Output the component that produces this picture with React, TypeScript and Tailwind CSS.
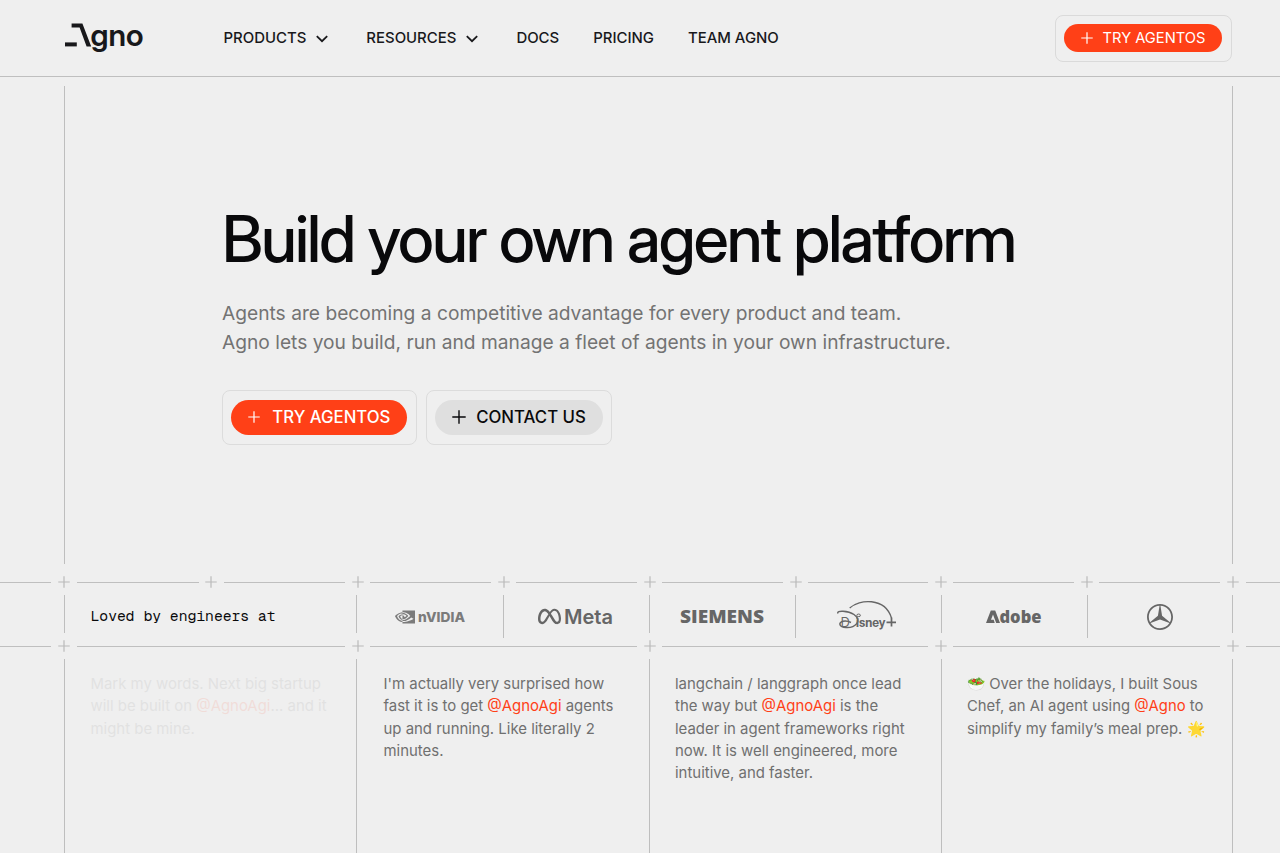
import { SiNvidia, SiMeta, SiMercedes } from "react-icons/si";
import { ReactNode } from "react";

function Plus({ size, className }: { size: number; className?: string }) {
  return (
    <svg width={size} height={size} viewBox="0 0 14 14" className={className} fill="none" stroke="currentColor" strokeWidth="1.4">
      <path d="M7 0.3v13.4M0.3 7h13.4" />
    </svg>
  );
}

function Chevron() {
  return (
    <svg width="17" height="10" viewBox="-2 -1 17 10" className="mt-[2px] mr-px" fill="none" stroke="#18181b" strokeWidth="1.8">
      <path d="M0.8 1.1L6 6.2L11.2 1.1" />
    </svg>
  );
}

function AgnoLogo() {
  return (
    <svg width="84" height="36" viewBox="0 0 84 36" className="block overflow-visible">
      <path d="M6.6 2.6H17.4L26.2 25.4H21.6L14.6 6.4H6.6Z" fill="#18181b" />
      <path d="M0 21.4H11.8V25.4H0Z" fill="#18181b" />
      <text x="25.6" y="25.2" textLength="53" lengthAdjust="spacingAndGlyphs" fontFamily="'Inter Display', Inter, sans-serif" fontWeight="600" fontSize="31" fill="#18181b">gno</text>
    </svg>
  );
}

function NavItem({ label, menu }: { label: string; menu?: boolean }) {
  return (
    <a className="flex items-center gap-2 text-[14.93px] leading-5 font-medium text-[#18181b]">
      {label}
      {menu && <Chevron />}
    </a>
  );
}

const columns = [
  "grid-cols-[51px_26px_121.5px_25.5px_121px_25px_121px_25px_121px_25px_121px_25px_120px_25px_121px_25px_121px_26px_1fr]",
  "grid-cols-[51px_26px_268px_25px_267px_25px_266px_25px_267px_26px_1fr]",
];

function Rule({ cells, grid }: { cells: number; grid: string }) {
  return (
    <div className={"grid h-[26px] items-center " + grid}>
      {Array.from({ length: cells }, (_, i) =>
        i % 2 === 0 ? (
          <span key={i} className="h-px bg-[#bfbfbf]" />
        ) : (
          <span key={i} className="flex justify-center text-[#bababa]">
            <Plus size={12} />
          </span>
        ),
      )}
    </div>
  );
}

function Cell({ children }: { children: ReactNode }) {
  return <div className="flex h-[43px] flex-1 items-center justify-center text-[#666]">{children}</div>;
}

function Line({ tall }: { tall?: boolean }) {
  return <span className={tall ? "h-[43px] w-px bg-[#bebebe]" : "h-[38px] w-px bg-[#bebebe]"} />;
}

function Mention({ children }: { children: ReactNode }) {
  return <span className="text-[#ff4017]">{children}</span>;
}

export default function App() {
  return (
    <div className="h-[853px] w-[1280px] overflow-hidden bg-[#efefef] font-['Inter',sans-serif] text-[#09090b]">
      <header className="flex h-[77px] items-start border-b border-[#bfbfbf] pr-[48px] pl-[65px]">
        <div className="w-[158.5px] pt-[21px]">
          <AgnoLogo />
        </div>
        <nav className="flex flex-1 gap-[34px] pt-[28px]">
          <NavItem label="PRODUCTS" menu />
          <NavItem label="RESOURCES" menu />
          <NavItem label="DOCS" />
          <NavItem label="PRICING" />
          <NavItem label="TEAM AGNO" />
        </nav>
        <div className="mt-[15px] h-[47px] w-[177px] rounded-lg border border-[#dadada] pt-[8px] pl-[8px]">
          <button className="flex h-7 w-[158px] items-center justify-center gap-[10px] rounded-full bg-[#ff4017] text-[14.7px] text-white">
            <Plus size={12} />
            TRY AGENTOS
          </button>
        </div>
      </header>

      <section className="mt-[9px] ml-[64px] h-[478px] w-[1169px] border-x border-[#bebebe] pt-[117px] pl-[157px]">
        <h1 className="font-['Inter_Display','Inter',sans-serif] text-[64px] leading-[72px] font-medium tracking-[-1.9px] whitespace-nowrap">
          Build your own agent platform
        </h1>
        <p className="mt-[24px] text-[19.2px] leading-[28.8px] whitespace-nowrap text-[#737373]">
          Agents are becoming a competitive advantage for every product and team.
          <br />
          Agno lets you build, run and manage a fleet of agents in your own infrastructure.
        </p>
        <div className="mt-[33px] flex gap-[9px]">
          <div className="h-[55px] w-[195px] rounded-lg border border-[#dcdcdc] pt-[9px] pl-[8.4px]">
            <button className="flex h-[35px] w-[176px] items-center justify-center gap-[12px] rounded-full bg-[#ff4017] text-[16.75px] font-medium text-white">
              <Plus size={12} />
              TRY AGENTOS
            </button>
          </div>
          <div className="h-[55px] w-[186px] rounded-lg border border-[#dcdcdc] pt-[9px] pl-[8px]">
            <button className="flex h-[35px] w-[168px] items-center justify-center gap-[10px] rounded-full bg-[#dfdfdf] text-[16.8px] font-medium">
              <Plus size={14} />
              CONTACT US
            </button>
          </div>
        </div>
      </section>

      <div className="mt-[5px]">
        <Rule cells={19} grid={columns[0]} />
      </div>
      <div className="ml-[64px] grid h-[38px] w-[1169px] grid-cols-[292px_293px_292px_291px_1px]">
        <div className="flex">
          <Line />
          <div className="flex h-[42px] items-center pl-[25.5px] font-['Geist_Mono','Liberation_Mono',monospace] text-[14.7px] whitespace-nowrap text-[#09090b]">
            Loved by engineers at
          </div>
        </div>
        <div className="flex">
          <Line />
          <Cell>
            <div className="flex items-center gap-[3px] pl-[2px]">
              <SiNvidia size={20} className="text-[#7b7b7b]" />
              <svg width="48" height="20" viewBox="0 0 48 20" className="overflow-visible">
                <text x="0" y="14.6" textLength="47" lengthAdjust="spacingAndGlyphs" fontFamily="Inter, sans-serif" fontWeight="800" fontSize="13.5" fill="#7b7b7b">nVIDIA</text>
              </svg>
            </div>
          </Cell>
          <Line tall />
          <Cell>
            <div className="flex items-center gap-[3px]">
              <SiMeta size={23} />
              <svg width="50" height="28" viewBox="0 0 50 28" className="overflow-visible">
                <text x="0" y="20.5" textLength="49" lengthAdjust="spacingAndGlyphs" fontFamily="Inter, sans-serif" fontWeight="600" fontSize="19.5" fill="#666">Meta</text>
              </svg>
            </div>
          </Cell>
        </div>
        <div className="flex">
          <Line />
          <Cell>
            <svg width="84" height="24" viewBox="0 0 84 24" className="mr-[2px] overflow-visible">
              <text x="0" y="18.3" textLength="84" lengthAdjust="spacingAndGlyphs" fontFamily="'Open Sans', sans-serif" fontWeight="800" fontSize="17" fill="#666">SIEMENS</text>
            </svg>
          </Cell>
          <Line tall />
          <Cell>
            <svg width="60" height="34" viewBox="0 0 60 34" fill="none" stroke="#666" className="mr-[3px] overflow-visible">
              <path d="M12.7 8C22-1 48-3 54.500 18" strokeWidth="1.3" />
              <path d="M54.500 17.500v9M49.500 22.300h9.500" strokeWidth="1.7" />
              <path d="M1 13.500C-1 10 11 10.500 17 14.500C26 21 18 28 9 27.500C2 27 1 22.500 6 21.300C9 20.700 12 21.500 14 22.500" strokeWidth="1.5" />
              <path d="M19.800 15.500a1.800 1.300 0 1 0 3.600-.3a1.800 1.300 0 1 0-3.600.3" strokeWidth="1" />
              <text x="3.800" y="27" fontFamily="'Inter Display', Inter, sans-serif" fontWeight="700" fill="#666" stroke="none">
                <tspan fontSize="13" fontWeight="400">D</tspan>
                <tspan x="19" fontSize="12" textLength="29.500" lengthAdjust="spacingAndGlyphs">isney</tspan>
              </text>
            </svg>
          </Cell>
        </div>
        <div className="flex">
          <Line />
          <Cell>
            <svg width="56" height="24" viewBox="0 0 56 24" className="overflow-visible">
              <path d="M0 18.100L4.800 5.600H9.200L14 18.100H10.200L7 9.500L5 14.800H7.700L8.700 18.100Z" fill="#666" />
              <text x="13.500" y="18.100" textLength="42" lengthAdjust="spacingAndGlyphs" fontFamily="'Open Sans', sans-serif" fontWeight="800" fontSize="17" fill="#666">dobe</text>
            </svg>
          </Cell>
          <Line tall />
          <Cell>
            <SiMercedes size={26} />
          </Cell>
        </div>
        <Line />
      </div>
      <Rule cells={11} grid={columns[1]} />

      <section className="ml-[64px] grid h-[194px] w-[1169px] grid-cols-[292px_293px_292px_292px] border-r border-[#bebebe] text-[14.93px] leading-[22.4px] text-[#707070]">
        <p className="border-l border-[#bebebe] pt-[13.800px] pl-[25.500px] whitespace-nowrap">
          <span className="block opacity-10">
            Mark my words. Next big startup
            <br />
            will be built on <Mention>@AgnoAgi</Mention>... and it
            <br />
            might be mine.
          </span>
        </p>
        <p className="border-l border-[#bebebe] pt-[13.800px] pl-[26.500px] whitespace-nowrap">
          I'm actually very surprised how
          <br />
          fast it is to get <Mention>@AgnoAgi</Mention> agents
          <br />
          up and running. Like literally 2
          <br />
          minutes.
        </p>
        <p className="border-l border-[#bebebe] pt-[13.800px] pl-[25px] whitespace-nowrap">
          langchain / langgraph once lead
          <br />
          the way but <Mention>@AgnoAgi</Mention> is the
          <br />
          leader in agent frameworks right
          <br />
          now. It is well engineered, more
          <br />
          intuitive, and faster.
        </p>
        <p className="border-l border-[#bebebe] pt-[13.800px] pl-[25px] text-[14.85px] whitespace-nowrap">
          🥗 Over the holidays, I built Sous
          <br />
          Chef, an AI agent using <Mention>@Agno</Mention> to
          <br />
          simplify my family’s meal prep. 🌟
        </p>
      </section>
    </div>
  );
}
